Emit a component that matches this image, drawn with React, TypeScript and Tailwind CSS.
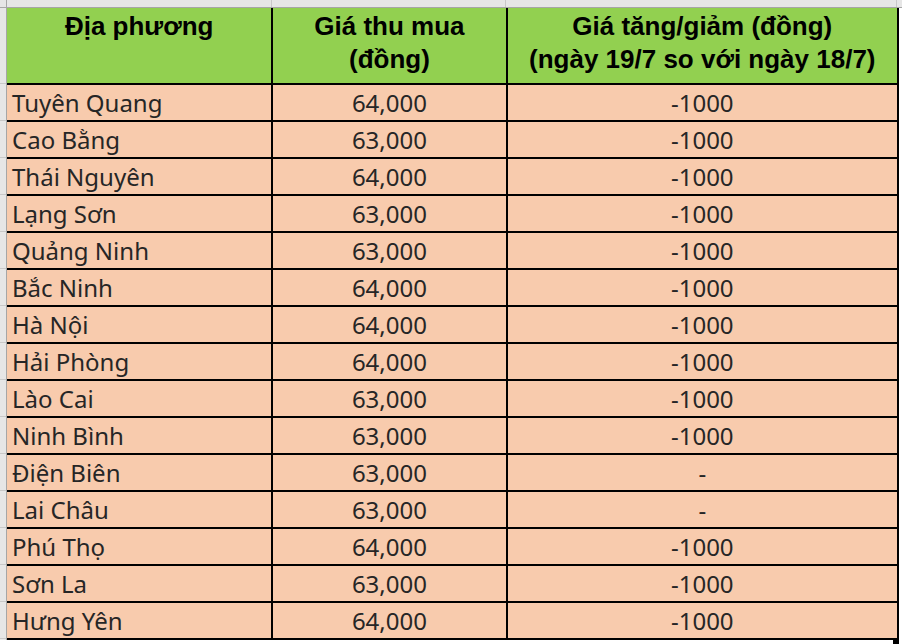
const rows: [string, string, string][] = [
  ["Tuyên Quang", "64,000", "-1000"],
  ["Cao Bằng", "63,000", "-1000"],
  ["Thái Nguyên", "64,000", "-1000"],
  ["Lạng Sơn", "63,000", "-1000"],
  ["Quảng Ninh", "63,000", "-1000"],
  ["Bắc Ninh", "64,000", "-1000"],
  ["Hà Nội", "64,000", "-1000"],
  ["Hải Phòng", "64,000", "-1000"],
  ["Lào Cai", "63,000", "-1000"],
  ["Ninh Bình", "63,000", "-1000"],
  ["Điện Biên", "63,000", "-"],
  ["Lai Châu", "63,000", "-"],
  ["Phú Thọ", "64,000", "-1000"],
  ["Sơn La", "63,000", "-1000"],
  ["Hưng Yên", "64,000", "-1000"],
];

const App = () => (
  <div className="w-[902px] h-[644px] overflow-hidden bg-white flex flex-col">
    {/* column header strip, mostly scrolled off */}
    <div className="h-[8px] shrink-0 flex bg-[#e6e6e6] border-b border-[#a6a6a6]">
      <div className="w-[7px] border-r border-[#a6a6a6]" />
      <div className="w-[265px] border-r border-[#c8c8c8]" />
      <div className="w-[234px] border-r border-[#c8c8c8]" />
      <div className="w-[391px] border-r border-[#c8c8c8]" />
    </div>
    <div className="flex">
      <div className="w-[7px] shrink-0 bg-[#e6e6e6] border-r border-[#a6a6a6] flex flex-col">
        <div className="h-[76px] border-b border-[#c8c8c8]" />
        {rows.map((r) => (
          <div key={r[0]} className="h-[37px] border-b border-[#c8c8c8]" />
        ))}
      </div>
      <div className="relative">
        <table className="border-collapse table-fixed w-[892px]">
          <colgroup>
            <col className="w-[265px]" />
            <col className="w-[234px]" />
            <col className="w-[391px]" />
          </colgroup>
          <thead>
            <tr className="h-[76px] bg-[#92d050] font-['Liberation_Sans',sans-serif] font-bold text-[26px] leading-[33px] text-black">
              <th className="border-r-2 border-b-2 border-black align-top pt-[2px] text-center">Địa phương</th>
              <th className="border-x-2 border-b-2 border-black align-top pt-[2px] text-center">
                Giá thu mua
                <br />
                (đồng)
              </th>
              <th className="border-x-2 border-b-2 border-black align-top pt-[2px] text-center">
                Giá tăng/giảm (đồng)
                <br />
                (ngày 19/7 so với ngày 18/7)
              </th>
            </tr>
          </thead>
          <tbody className="font-['Noto_Sans',sans-serif] text-[24px] text-[#262626]">
            {rows.map((r) => (
              <tr key={r[0]} className="h-[37px] bg-[#f8cbad]">
                <td className="border-r-2 border-b-2 border-black pl-[5px] leading-[34px]">{r[0]}</td>
                <td className="border-x-2 border-b-2 border-black text-center leading-[34px]">{r[1]}</td>
                <td className="border-x-2 border-b-2 border-black text-center leading-[34px]">{r[2]}</td>
              </tr>
            ))}
          </tbody>
        </table>
        <div className="absolute right-[0px] bottom-[-6px] w-[6px] h-[6px] bg-black" />
      </div>
    </div>
  </div>
);

export default App;
